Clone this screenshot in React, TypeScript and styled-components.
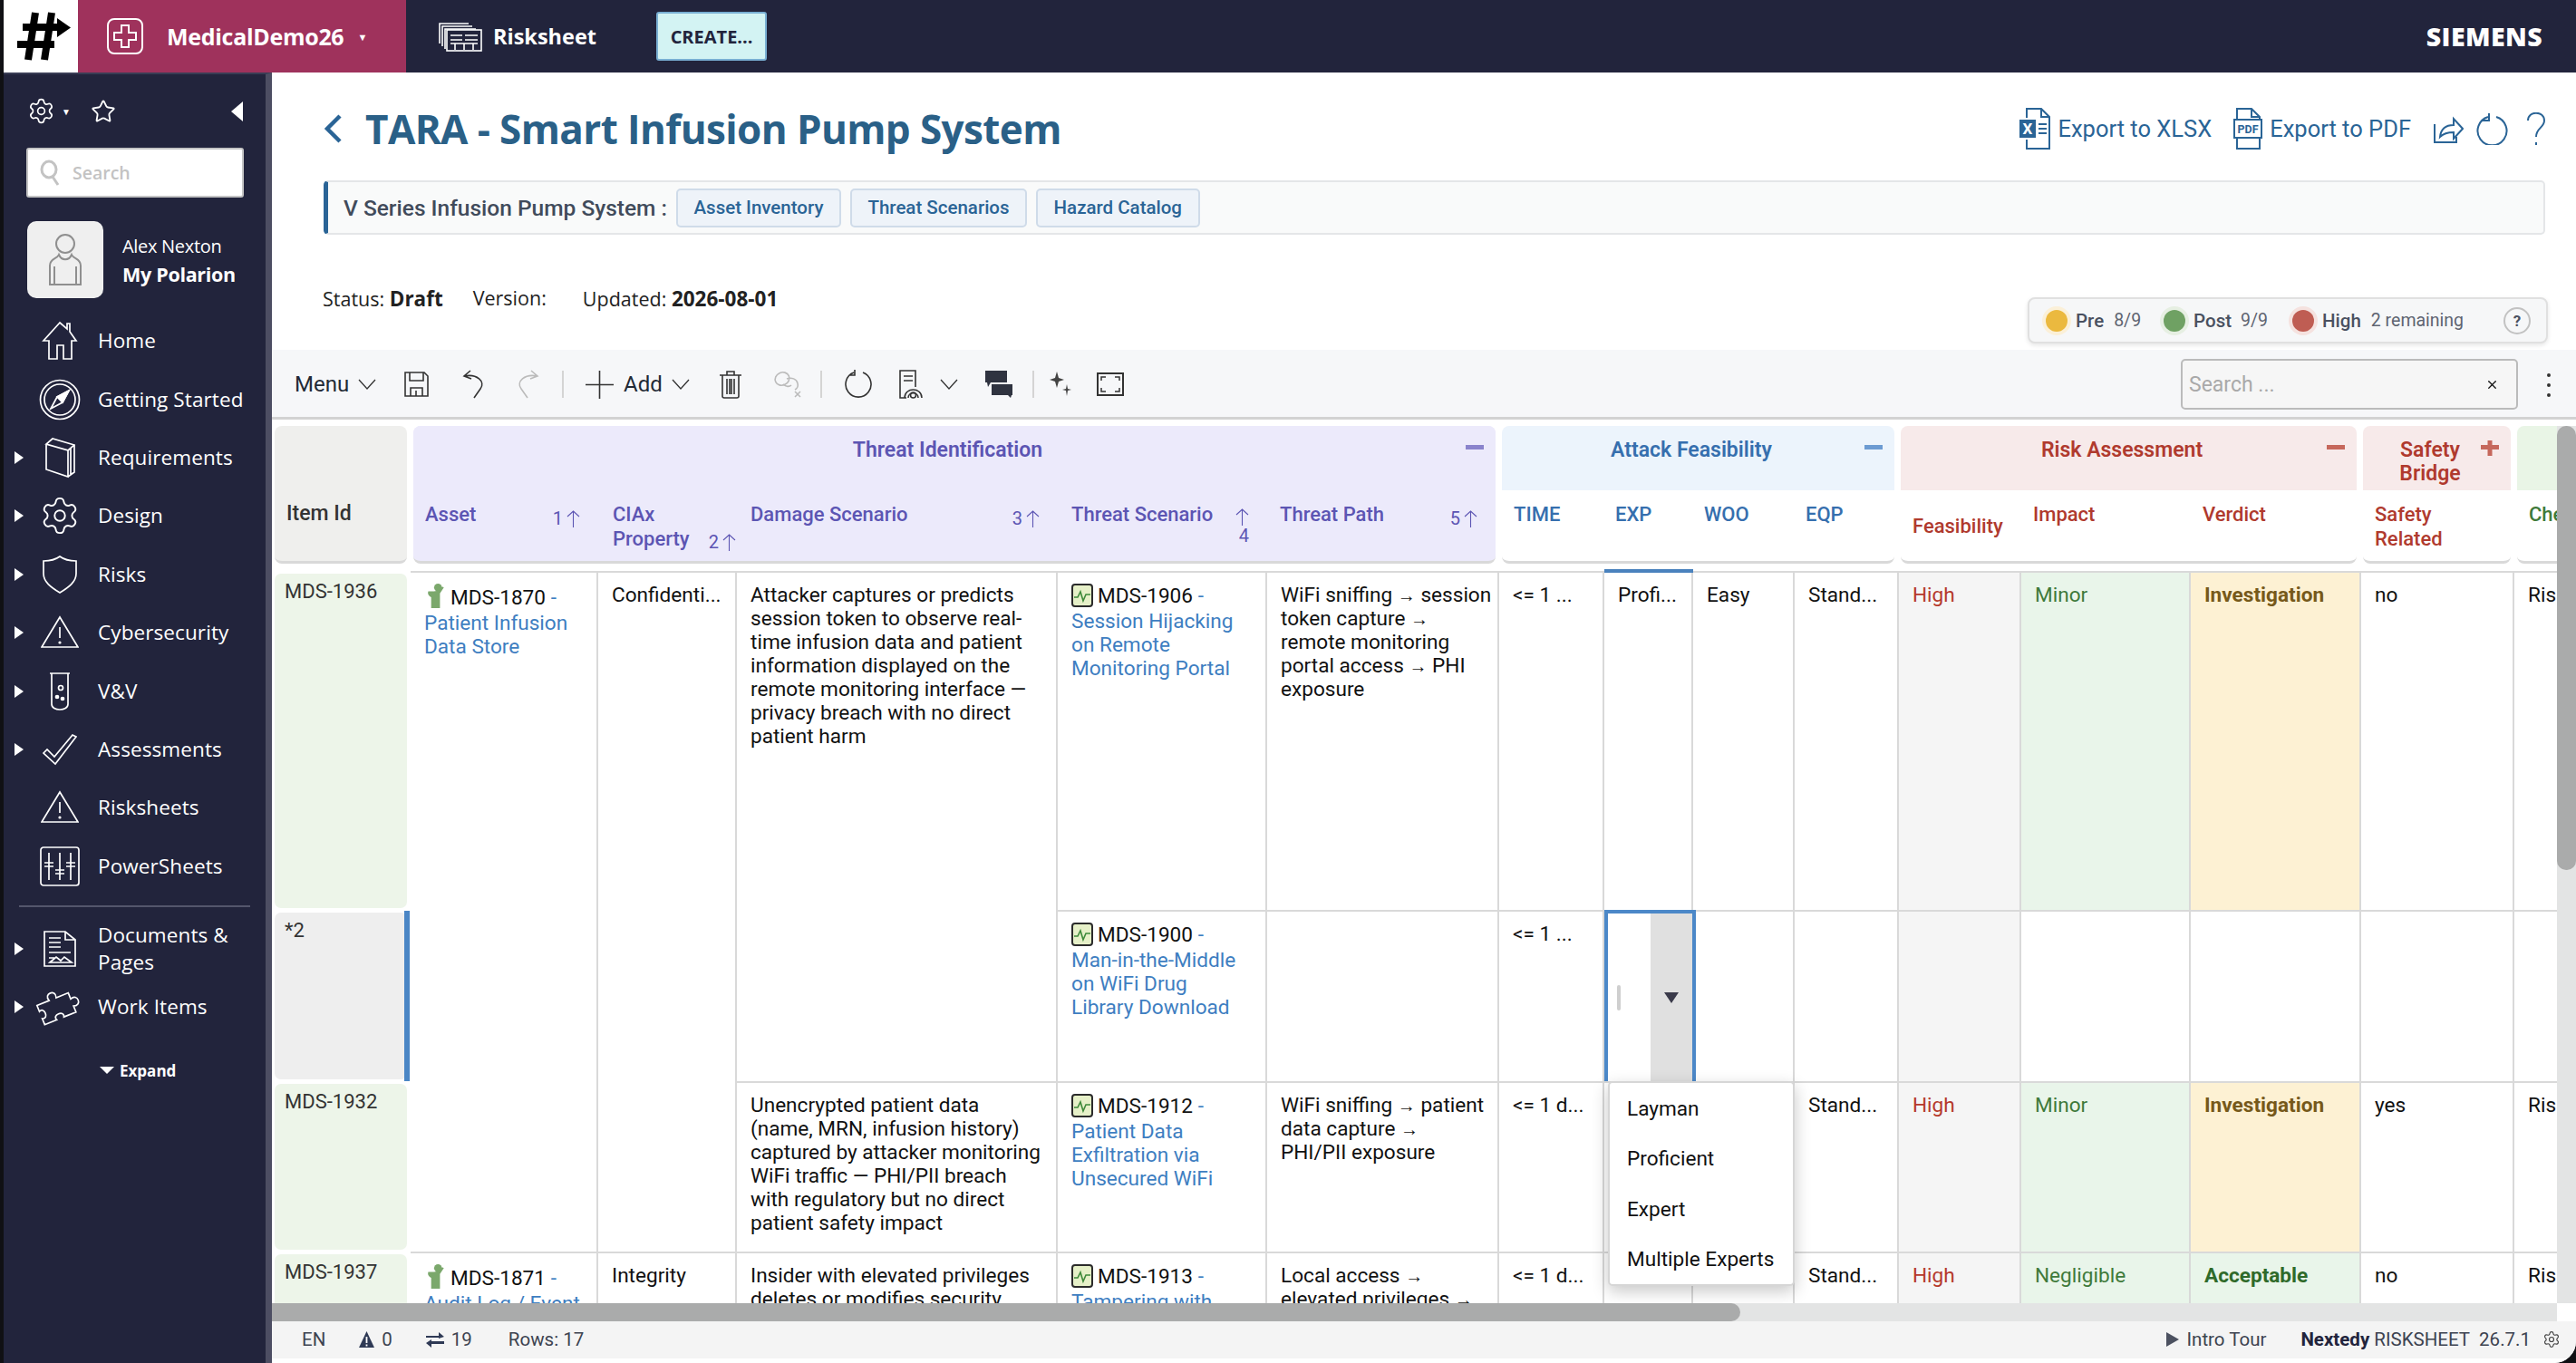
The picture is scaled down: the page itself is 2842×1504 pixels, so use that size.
import React from 'react';
import styled, { createGlobalStyle } from 'styled-components';
import { Settings, Star, X } from 'lucide-react';

const SANS = '"Open Sans", "Noto Sans", sans-serif';
const TABLE = 'Roboto, "Liberation Sans", sans-serif';

const Global = createGlobalStyle`
  html, body { margin: 0; padding: 0; background: #101014; }
  body { width: 2842px; height: 1504px; overflow: hidden; font-family: ${TABLE}; }
  * { box-sizing: border-box; }
`;

const Frame = styled.div`
  margin-left: 4px;
  width: 2838px;
  height: 1504px;
  display: flex;
  flex-direction: column;
  background: #fff;
  border-radius: 0 0 24px 0;
  overflow: hidden;
`;

/* top bar */
const TopBar = styled.header`
  height: 80px;
  flex: none;
  display: flex;
  align-items: center;
  background: #22243c;
  color: #fff;
`;
const LogoBox = styled.div`
  width: 82px;
  height: 80px;
  background: #fff;
  display: flex;
  align-items: center;
  padding-left: 15px;
`;
const ProjectBlock = styled.div`
  width: 362px;
  height: 80px;
  background: #9f325c;
  display: flex;
  align-items: center;
  padding-left: 32px;
  font: 700 25px ${SANS};
  letter-spacing: -0.3px;
`;
const ProjectName = styled.span`
  margin-left: 26px;
`;
const SmallCaret = styled.span`
  margin-left: 15px;
  font-size: 11px;
`;
const AppTitle = styled.div`
  margin-left: 36px;
  display: flex;
  align-items: center;
  gap: 12px;
  font: 700 23.5px ${SANS};
`;
const CreateButton = styled.button`
  margin-left: 66px;
  width: 122px;
  height: 54px;
  background: #d3f3f3;
  border: 2px solid #79afd3;
  border-radius: 3px;
  color: #22243c;
  font: 700 20px ${SANS};
  padding: 0;
`;
const Brand = styled.div`
  margin-left: auto;
  margin-right: 37px;
  font: 800 28.5px ${SANS};
  letter-spacing: 0.4px;
`;

/* body */
const Body = styled.div`
  flex: 1;
  min-height: 0;
  display: flex;
`;
const Sidebar = styled.nav`
  width: 296px;
  flex: none;
  background: #22243c;
  border-top: 2px solid #3a3d55;
  border-right: 7px solid #4d4e63;
  color: #fff;
  display: flex;
  flex-direction: column;
  font-family: ${SANS};
`;
const SideTools = styled.div`
  height: 61px;
  padding: 20px 25px 0 26px;
  display: flex;
  align-items: center;
`;
const ToolCaret = styled.span`
  margin-left: 7px;
  font-size: 10px;
`;
const StarSlot = styled.span`
  margin-left: 22px;
  display: flex;
`;
const CollapseArrow = styled.span`
  margin-left: auto;
  width: 0;
  height: 0;
  border-top: 11px solid transparent;
  border-bottom: 11px solid transparent;
  border-right: 13px solid #fff;
`;
const SideSearch = styled.div`
  margin: 20px 0 0 25px;
  width: 240px;
  height: 55px;
  background: #fff;
  border: 2px solid #c4c4c4;
  border-radius: 3px;
  display: flex;
  align-items: center;
  gap: 14px;
  padding-left: 13px;
  color: #c3c3c3;
  font: 600 19.5px ${SANS};
`;
const UserRow = styled.div`
  margin: 26px 0 0 26px;
  display: flex;
  align-items: center;
  gap: 21px;
`;
const Avatar = styled.div`
  width: 84px;
  height: 85px;
  background: #efefef;
  border-radius: 10px;
  display: flex;
  align-items: center;
  justify-content: center;
`;
const UserName = styled.div`
  font-size: 20px;
  line-height: 31px;
  letter-spacing: -0.3px;
`;
const UserLink = styled.div`
  font-size: 21.5px;
  line-height: 31px;
  font-weight: 700;
  letter-spacing: -0.3px;
`;
const NavList = styled.div`
  margin-top: 15px;
  display: flex;
  flex-direction: column;
`;
const NavItem = styled.div`
  height: 64.4px;
  display: grid;
  grid-template-columns: 24px 60px 1fr;
  align-items: center;
  padding-left: 8px;
  font-size: 22.5px;
  line-height: 30px;
  letter-spacing: 0.1px;
`;
const NavArrow = styled.span`
  width: 0;
  height: 0;
  border-top: 7px solid transparent;
  border-bottom: 7px solid transparent;
  border-left: 10px solid #fff;
  margin-left: 4px;
`;
const NavIcon = styled.span`
  grid-column: 2;
  display: flex;
  justify-content: center;
`;
const NavLabel = styled.span`
  grid-column: 3;
  padding-left: 12px;
`;
const NavDivider = styled.hr`
  margin: 11px 17px 14px 17px;
  border: 0;
  border-top: 2px solid #54566c;
`;
const ExpandRow = styled.div`
  margin-top: 26px;
  padding-left: 106px;
  display: flex;
  align-items: center;
  gap: 6px;
  font-size: 17px;
  font-weight: 700;
`;
const ExpandCaret = styled.span`
  width: 0;
  height: 0;
  border-left: 8px solid transparent;
  border-right: 8px solid transparent;
  border-top: 8px solid #fff;
`;

/* main */
const Main = styled.main`
  flex: 1;
  min-width: 0;
  display: flex;
  flex-direction: column;
`;
const PageHead = styled.section`
  height: 306px;
  flex: none;
  padding: 0 34px 0 57px;
  display: flex;
  flex-direction: column;
`;
const TitleRow = styled.div`
  height: 119px;
  display: flex;
  align-items: center;
  padding-top: 4px;
`;
const Title = styled.h1`
  margin: 0 0 0 24px;
  font: 700 44px ${SANS};
  letter-spacing: -0.6px;
  color: #2a6087;
`;
const ExportGroup = styled.div`
  margin-left: auto;
  display: flex;
  align-items: center;
  color: #2a6496;
  font: 400 25.5px ${TABLE};
`;
const ExportLink = styled.span<{ $ml?: number }>`
  display: flex;
  align-items: center;
  gap: 8px;
  margin-left: ${(p) => p.$ml ?? 0}px;
`;
const HeadIcon = styled.svg<{ $ml: number }>`
  margin-left: ${(p) => p.$ml}px;
`;
const CrumbBar = styled.div`
  height: 60px;
  flex: none;
  display: flex;
  align-items: center;
  gap: 10px;
  background: #f9fafa;
  border: 2px solid #e4e6e8;
  border-left: 5px solid #2a6496;
  border-radius: 5px;
  padding-left: 17px;
`;
const CrumbTitle = styled.span`
  font: 500 24.5px ${TABLE};
  color: #414b5b;
`;
const Chip = styled.span`
  height: 43px;
  display: flex;
  align-items: center;
  padding: 0 17.5px;
  background: #eef3f9;
  border: 2px solid #cfdbe9;
  border-radius: 5px;
  color: #2a6496;
  font: 500 20.5px ${TABLE};
`;
const StatusRow = styled.div`
  flex: 1;
  display: flex;
  justify-content: space-between;
  align-items: flex-start;
  margin: 0 -3px 0 -1px;
`;
const StatusMeta = styled.div`
  margin-top: 55px;
  display: flex;
  font: 400 21.5px ${SANS};
  color: #222;
`;
const MetaItem = styled.span<{ $ml?: number }>`
  margin-left: ${(p) => p.$ml ?? 0}px;
  b { font-weight: 700; font-size: 22.5px; }
`;
const ProgressPill = styled.div`
  margin-top: 69px;
  width: 574px;
  height: 51px;
  display: flex;
  align-items: center;
  padding-left: 18px;
  background: #f6f7f8;
  border: 2px solid #e0e0e0;
  border-radius: 8px;
  box-shadow: 0 2px 5px rgba(0, 0, 0, 0.1);
  font: 500 20.5px ${TABLE};
  color: #4a5160;
`;
const Dot = styled.span<{ $c: string; $glow: string; $ml?: number }>`
  width: 24px;
  height: 24px;
  border-radius: 50%;
  background: ${(p) => p.$c};
  box-shadow: 0 0 0 4px ${(p) => p.$glow};
  margin: 0 9px 0 ${(p) => p.$ml ?? 0}px;
`;
const PillCount = styled.span<{ $ml: number }>`
  margin-left: ${(p) => p.$ml}px;
  font-weight: 400;
  font-size: 19.5px;
  color: #5e6471;
`;
const HelpCircle = styled.span`
  margin-left: auto;
  margin-right: 17px;
  width: 30px;
  height: 30px;
  border: 2px solid #c2c2c2;
  border-radius: 50%;
  display: flex;
  align-items: center;
  justify-content: center;
  font: 700 17px ${TABLE};
`;

/* toolbar */
const Toolbar = styled.div`
  height: 77px;
  flex: none;
  display: flex;
  align-items: center;
  padding: 2px 0 0 25px;
  background: #f6f7f9;
  border-bottom: 3px solid #d2d2d2;
  color: #222a36;
  font: 400 24px ${TABLE};
`;
const ToolLabel = styled.span<{ $w: number; $ml?: number }>`
  width: ${(p) => p.$w}px;
  margin-left: ${(p) => p.$ml ?? 0}px;
`;
const ToolSvg = styled.svg<{ $ml: number }>`
  margin-left: ${(p) => p.$ml}px;
  flex: none;
`;
const ToolSep = styled.span<{ $ml: number }>`
  width: 2px;
  height: 30px;
  background: #d4d4d4;
  margin-left: ${(p) => p.$ml}px;
`;
const SearchBox = styled.div`
  margin-left: auto;
  margin-right: 64px;
  width: 372px;
  height: 56px;
  background: #f6f6f6;
  border: 2px solid #bbb;
  border-radius: 5px;
  display: flex;
  align-items: center;
  justify-content: space-between;
  padding: 0 19px 0 7px;
  color: #a9a9a9;
  font-size: 23px;
`;
const Kebab = styled.span`
  position: absolute;
  right: 28px;
  top: 412px;
  display: flex;
  flex-direction: column;
  gap: 7px;
  i { width: 4px; height: 4px; border-radius: 50%; background: #333; display: block; }
`;

/* table */
const TableArea = styled.div`
  position: relative;
  flex: 1;
  min-height: 0;
  display: flex;
  flex-direction: column;
  padding-top: 7px;
`;
const HeaderRow = styled.div`
  height: 152px;
  flex: none;
  display: flex;
  gap: 7px;
  padding-left: 3px;
  overflow: hidden;
`;
const ItemHeader = styled.div`
  width: 146px;
  flex: none;
  background: #efefed;
  border-bottom: 3px solid #d9d9d9;
  border-radius: 8px;
  padding: 84px 0 0 13px;
  font: 500 23px/26px ${TABLE};
  color: #333;
`;
const Group = styled.div<{ $w: number; $fill: string; $solid?: boolean; $fg: string }>`
  position: relative;
  width: ${(p) => p.$w}px;
  flex: none;
  color: ${(p) => p.$fg};
  border-bottom: 3px solid #d9d9d9;
  border-radius: 8px;
  background: ${(p) => (p.$solid ? p.$fill : '#fff')};
  overflow: hidden;
  font: 500 22px/26px ${TABLE};
`;
const GroupTitle = styled.div<{ $fill: string }>`
  height: 71px;
  background: ${(p) => p.$fill};
  padding: 14px 15px 0 0;
  text-align: center;
  font-size: 23px;
  font-weight: 600;
`;
const GroupToggle = styled.span`
  position: absolute;
  top: 16px;
  right: 13px;
  font-size: 0;
`;
const SubRow = styled.div<{ $cols: string }>`
  display: grid;
  grid-template-columns: ${(p) => p.$cols};
  padding-left: 5px;
`;
const SubCell = styled.div<{ $top?: number }>`
  position: relative;
  display: flex;
  justify-content: space-between;
  align-items: flex-start;
  padding: ${(p) => p.$top ?? 13}px 8px 0;
  line-height: 27px;
`;
const SortMark = styled.span<{ $low?: boolean; $stack?: boolean; $mr: number }>`
  display: flex;
  flex-direction: ${(p) => (p.$stack ? 'column' : 'row')};
  align-items: ${(p) => (p.$stack ? 'flex-end' : 'center')};
  gap: ${(p) => (p.$stack ? 0 : 4)}px;
  margin-top: ${(p) => (p.$low ? 33 : 7)}px;
  margin-right: ${(p) => p.$mr}px;
  font-weight: 400;
  font-size: 20px;
  line-height: 22px;
  svg { flex: none; }
`;

const TableBody = styled.div`
  position: relative;
  height: 816px;
  flex: none;
  padding-top: 8px;
  overflow: hidden;
  display: grid;
  grid-template-columns: 153px 207px 153px 354px 231px 256px 116px 98px 112px 115px 135px 187px 188px 169px 68px;
  grid-template-rows: 374px 189px 188px 260px;
  font: 400 22.6px/26px ${TABLE};
  color: #111;
`;
const ItemCell = styled.div<{ $current?: boolean }>`
  position: relative;
  margin: 3px 4px 2px 3px;
  padding: 7px 11px;
  border-radius: 7px;
  background: ${(p) => (p.$current ? '#eeeeee' : '#edf5e9')};
  color: #333;
  font-size: 22px;
  &::after {
    content: '';
    display: ${(p) => (p.$current ? 'block' : 'none')};
    position: absolute;
    right: -3px;
    top: -2px;
    bottom: -2px;
    width: 6px;
    background: #4a86c5;
  }
`;
const Cell = styled.div<{ $span?: number; $bg?: string; $fg?: string; $bold?: boolean; $active?: boolean }>`
  position: relative;
  grid-row: span ${(p) => p.$span ?? 1};
  padding: 12px 8px 0 15px;
  border-top: 2px solid #d9d9d9;
  border-right: 2px solid #d9d9d9;
  background: ${(p) => p.$bg ?? '#fff'};
  color: ${(p) => p.$fg ?? 'inherit'};
  font-weight: ${(p) => (p.$bold ? 700 : 400)};
  overflow: visible;
  &::before {
    content: '';
    display: ${(p) => (p.$active ? 'block' : 'none')};
    position: absolute;
    top: -4px;
    left: 0;
    right: -2px;
    height: 4px;
    background: #4a82bd;
  }
`;
const TextLine = styled.div`
  white-space: nowrap;
`;
const ArrowGlyph = styled.span`
  font-size: 20px;
`;
const ItemRef = styled.span`
  svg { vertical-align: -5px; margin-right: 5px; }
`;
const ItemDash = styled.span`
  color: #3e7ec1;
`;
const ItemLink = styled.div`
  margin-top: 2px;
  max-width: 192px;
  color: #3e7ec1;
`;
const EditorCell = styled.div`
  position: relative;
  z-index: 2;
  margin-right: -3px;
  display: flex;
  border: 4px solid #4c88c8;
  border-bottom-width: 0;
  background: #fff;
`;
const EditorCaretArea = styled.div`
  width: 47px;
  display: flex;
  align-items: center;
  padding-left: 10px;
`;
const EditorCaret = styled.span`
  width: 4px;
  height: 28px;
  border-radius: 2px;
  background: #cfcfcf;
`;
const EditorButton = styled.div`
  flex: 1;
  background: #e0e0e0;
  display: flex;
  align-items: center;
  justify-content: center;
`;
const EditorTriangle = styled.span`
  width: 0;
  height: 0;
  border-left: 8px solid transparent;
  border-right: 8px solid transparent;
  border-top: 12px solid #3a3a4a;
`;
const Menu = styled.ul`
  position: absolute;
  z-index: 3;
  left: 1474px;
  top: 571px;
  width: 206px;
  height: 226px;
  margin: 0;
  padding: 1px 0 0;
  list-style: none;
  background: #fff;
  border: 2px solid #d6d6d6;
  border-radius: 5px;
  box-shadow: 0 6px 18px rgba(0, 0, 0, 0.22);
`;
const MenuItem = styled.li`
  height: 55.5px;
  display: flex;
  align-items: center;
  padding-left: 19px;
  white-space: nowrap;
`;
const HBar = styled.div`
  height: 20px;
  width: 2521px;
  flex: none;
  background: #e3e4e4;
`;
const HThumb = styled.div`
  height: 100%;
  width: 1620px;
  background: #aaabab;
  border-radius: 0 10px 10px 0;
`;
const VBar = styled.div`
  position: absolute;
  top: 7px;
  right: 0;
  bottom: 66px;
  width: 21px;
  background: #e3e4e4;
`;
const VThumb = styled.div`
  height: 490px;
  background: #aaabab;
  border-radius: 10px;
`;
const Footer = styled.footer`
  height: 41px;
  flex: none;
  display: flex;
  align-items: center;
  padding: 0 17px 2px 33px;
  background: #f4f4f4;
  color: #3d4350;
  font: 400 20.5px ${TABLE};
`;
const FootItem = styled.span<{ $ml?: number; $push?: boolean }>`
  display: flex;
  align-items: center;
  gap: 8px;
  margin-left: ${(p) => (p.$push ? 'auto' : `${p.$ml ?? 0}px`)};
`;
const FootBrand = styled.b`
  color: #22243c;
  font-weight: 700;
`;
const BelowFooter = styled.div`
  height: 5px;
  flex: none;
  background: #fff;
`;

/* drawings */
const Hash = () => (
  <svg width="60" height="54" viewBox="0 0 60 54" fill="none" stroke="#000" strokeWidth="8">
    <path d="M20 1 12 53M38 1 30 53M6 17H46M0 36H41" />
    <path d="M44 7 59 17.5 44 28Z" fill="#000" stroke="none" />
  </svg>
);
const CrossBadge = () => (
  <svg width="40" height="40" viewBox="0 0 40 40" fill="none" stroke="#fff" strokeWidth="2">
    <rect x="1" y="1" width="38" height="38" rx="7" />
    <path d="M16 8h8v8h8v8h-8v8h-8v-8H8v-8h8Z" />
  </svg>
);
const SheetStack = () => (
  <svg width="48" height="33" viewBox="0 0 48 33" fill="none" stroke="#fff" strokeWidth="1.6">
    <path d="M1 24V2h32M4 27V5h33M7 30V8h34" />
    <rect x="9" y="9" width="38" height="23" fill="#22243c" />
    <path d="M13 15h13M29 15h14M13 20h13M29 20h14M18 24v7M28 24v7M38 24v7M13 24h30" />
  </svg>
);
const Glass = () => (
  <svg width="22" height="30" viewBox="0 0 22 30" fill="none" stroke="#c3c3c3" strokeWidth="3">
    <ellipse cx="10" cy="11" rx="8" ry="9" />
    <path d="M14 19l6 9" />
  </svg>
);
const Person = () => (
  <svg width="38" height="58" viewBox="0 0 38 58" fill="none" stroke="#8f8f8f" strokeWidth="2">
    <ellipse cx="19" cy="11" rx="10" ry="10" />
    <path d="M12 23c-2 5-10 4-10 12v21h34V35c0-8-8-7-10-12-3 7-11 7-14 0Z" />
    <path d="M7 36v19M31 36v19" />
  </svg>
);

const navStroke = { fill: 'none', stroke: '#fff', strokeWidth: 1.7 };
const Icon = ({ d, w = 44, h = 44, extra }: { d: string; w?: number; h?: number; extra?: React.ReactNode }) => (
  <svg width={w} height={h} viewBox={`0 0 ${w} ${h}`} {...navStroke}>
    <path d={d} />
    {extra}
  </svg>
);
const Warn = () => (
  <Icon
    w={42}
    h={38}
    d="M21 2 41 35H1ZM21 13v12"
    extra={<circle cx="21" cy="30" r="1.6" fill="#fff" stroke="none" />}
  />
);
const NAV: { label: React.ReactNode; arrow?: boolean; icon: React.ReactNode; divider?: boolean }[] = [
  { label: 'Home', icon: <Icon w={40} h={44} d="M20 2 2 22h6v20h9V27h7v15h9V22h5L31 12V3h-3v6Z" /> },
  {
    label: 'Getting Started',
    icon: (
      <svg width="46" height="46" viewBox="0 0 46 46" {...navStroke}>
        <circle cx="23" cy="23" r="21.5" />
        <circle cx="23" cy="23" r="17" />
        <path d="M33 13 26 26 13 33 20 20Z" />
        <path d="M33 13 20 20 26 26Z" fill="#fff" />
      </svg>
    ),
  },
  { label: 'Requirements', arrow: true, icon: <Icon w={34} h={46} d="M2 8V36l24 8V15L2 8 9 2l24 7-7 6M26 44l7-5V9M29 12v29" /> },
  { label: 'Design', arrow: true, icon: <Settings size={46} strokeWidth={1} color="#fff" /> },
  { label: 'Risks', arrow: true, icon: <Icon w={40} h={44} d="M2 7C10 7 16 5 20 2c4 3 10 5 18 5v14c0 9-8 15-18 21C10 36 2 30 2 21Z" /> },
  { label: 'Cybersecurity', arrow: true, icon: <Warn /> },
  {
    label: 'V&V',
    arrow: true,
    icon: (
      <Icon
        w={24}
        h={44}
        d="M1 2H23M3 2V36c0 8 18 8 18 0V2"
        extra={
          <>
            <circle cx="13" cy="18" r="2.5" />
            <circle cx="9" cy="28" r="1.5" fill="#fff" />
            <circle cx="15" cy="30" r="1.5" fill="#fff" />
          </>
        }
      />
    ),
  },
  { label: 'Assessments', arrow: true, icon: <Icon w={38} h={36} d="M1 22 5 18 13 26 33 2 37 4 14 34Z" /> },
  { label: 'Risksheets', icon: <Warn /> },
  {
    label: 'PowerSheets',
    divider: true,
    icon: (
      <svg width="44" height="44" viewBox="0 0 44 44" {...navStroke}>
        <rect x="1" y="1" width="42" height="42" rx="3" />
        <path d="M10 7v30M22 7v30M34 7v30M5 18h10M17 26h10M29 18h10M5 22h10M17 30h10M29 22h10" />
      </svg>
    ),
  },
  {
    label: (
      <>
        Documents &amp;
        <br />
        Pages
      </>
    ),
    arrow: true,
    icon: <Icon w={36} h={42} d="M1 2H24L35 11V40H1ZM24 2V11H35M6 9h13M6 14h13M6 19h13M6 25h24M6 31h6M7 36l7-6 5 4 4-4 8 6Z" />,
  },
  {
    label: 'Work Items',
    arrow: true,
    icon: (
      <svg width="50" height="46" viewBox="0 0 50 46" overflow="visible" {...navStroke}>
        <path
          transform="translate(25 23) rotate(-22) scale(1.2) translate(-25 -23)"
          strokeWidth="1.4"
          d="M6 14H18c-3-8 10-8 7 0H37v6c8-3 8 10 0 7v6H25c3-6-10-6-7 0H6v-6c6 3 6-10 0-7Z"
        />
      </svg>
    ),
  },
];

const Xlsx = () => (
  <svg width="34" height="48" viewBox="0 0 34 48" fill="none" stroke="#2a6496" strokeWidth="2">
    <path d="M8 12V2h16l9 9v35H8V36" />
    <path d="M24 2v9h9M21 19h9M21 24h9M21 29h9" />
    <rect x="0" y="14" width="18" height="20" fill="#2a6496" stroke="none" />
    <text x="9" y="30" textAnchor="middle" fontSize="17" fontWeight="700" fill="#fff" stroke="none" fontFamily="Roboto">X</text>
  </svg>
);
const Pdf = () => (
  <svg width="32" height="48" viewBox="0 0 32 48" fill="none" stroke="#2a6496" strokeWidth="2">
    <path d="M4 14V2h16l9 9v3M4 34v12h25V34M20 2v9h9" />
    <rect x="1" y="14" width="30" height="20" />
    <text x="16" y="29" textAnchor="middle" fontSize="12.5" fontWeight="700" fill="#2a6496" stroke="none" fontFamily="Roboto">PDF</text>
  </svg>
);

const Chevron = ({ ml }: { ml: number }) => (
  <ToolSvg $ml={ml} width="20" height="12" viewBox="0 0 20 12" fill="none" stroke="#333" strokeWidth="1.3">
    <path d="M1 1l9 10 9-10" />
  </ToolSvg>
);

const SortArrow = () => (
  <svg width="15" height="19" viewBox="0 0 15 19" fill="none" stroke="currentColor" strokeWidth="1.1">
    <path d="M7.5 19V1M1 7l6.5-6L14 7" />
  </svg>
);

const PersonType = () => (
  <svg width="24" height="28" viewBox="0 0 22 26" fill="#7ba86c">
    <ellipse cx="14" cy="4" rx="4" ry="4" />
    <path d="M4 8c-1 3 1 5 3 6v11h9V10l4-6c-2-2-3 0-5 3-3 1-7 1-11 1Z" />
  </svg>
);
const ChartType = () => (
  <svg width="24" height="26" viewBox="0 0 24 26">
    <rect x="1" y="1" width="22" height="24" rx="3" fill="#e6f0c8" stroke="#2b2b2b" strokeWidth="2" />
    <path d="M3 15h4l3-6 3 10 3-7h5" fill="none" stroke="#3e8a3a" strokeWidth="1.6" />
  </svg>
);

const Toggle = ({ color, plus }: { color: string; plus?: boolean }) => (
  <GroupToggle>
    <svg width="20" height="20" viewBox="0 0 20 20" fill={color}>
      <rect x="0" y="5" width="20" height="5" />
      {plus && <rect x="7.5" y="-3" width="5" height="20" />}
    </svg>
  </GroupToggle>
);

const WorkRef = ({ kind, id, title }: { kind: 'p' | 'c'; id: string; title: string }) => (
  <ItemRef>
    {kind === 'p' ? <PersonType /> : <ChartType />}
    {id} <ItemDash>-</ItemDash>
    <ItemLink>{title}</ItemLink>
  </ItemRef>
);

// keeps the line breaks of the sheet, arrows drawn a little smaller than the font's
const Lines = ({ text }: { text: string[] }) => (
  <>
    {text.map((line, i) => (
      <TextLine key={i}>
        {line.split('→').map((part, j) => (
          <React.Fragment key={j}>
            {j > 0 && <ArrowGlyph>→</ArrowGlyph>}
            {part}
          </React.Fragment>
        ))}
      </TextLine>
    ))}
  </>
);

const FEAS = '#f5f5f5';
const RED = '#b5392b';
const GREEN_BG = '#e9f5ea';
const GREEN = '#3f7a3a';
const AMBER_BG = '#fdf1d3';
const AMBER = '#76591a';

const App = () => (
  <Frame>
    <Global />
    <TopBar>
      <LogoBox>
        <Hash />
      </LogoBox>
      <ProjectBlock>
        <CrossBadge />
        <ProjectName>MedicalDemo26</ProjectName>
        <SmallCaret>▼</SmallCaret>
      </ProjectBlock>
      <AppTitle>
        <SheetStack />
        Risksheet
      </AppTitle>
      <CreateButton>CREATE...</CreateButton>
      <Brand>SIEMENS</Brand>
    </TopBar>
    <Body>
      <Sidebar>
        <SideTools>
          <Settings size={31} strokeWidth={1.3} color="#fff" />
          <ToolCaret>▼</ToolCaret>
          <StarSlot>
            <Star size={28} strokeWidth={1.6} color="#fff" />
          </StarSlot>
          <CollapseArrow />
        </SideTools>
        <SideSearch>
          <Glass />
          Search
        </SideSearch>
        <UserRow>
          <Avatar>
            <Person />
          </Avatar>
          <div>
            <UserName>Alex Nexton</UserName>
            <UserLink>My Polarion</UserLink>
          </div>
        </UserRow>
        <NavList>
          {NAV.map((n, i) => (
            <React.Fragment key={i}>
              <NavItem>
                {n.arrow && <NavArrow />}
                <NavIcon>{n.icon}</NavIcon>
                <NavLabel>{n.label}</NavLabel>
              </NavItem>
              {n.divider && <NavDivider />}
            </React.Fragment>
          ))}
        </NavList>
        <ExpandRow>
          <ExpandCaret />
          Expand
        </ExpandRow>
      </Sidebar>
      <Main>
        <PageHead>
          <TitleRow>
            <svg width="22" height="32" viewBox="0 0 22 32" fill="none" stroke="#2a6496" strokeWidth="4.5">
              <path d="M18 2 4 16l14 14" />
            </svg>
            <Title>TARA - Smart Infusion Pump System</Title>
            <ExportGroup>
              <ExportLink>
                <Xlsx />
                Export to XLSX
              </ExportLink>
              <ExportLink $ml={24}>
                <Pdf />
                Export to PDF
              </ExportLink>
              <HeadIcon $ml={24} width="34" height="34" viewBox="0 0 34 34" fill="none" stroke="#2a6496" strokeWidth="2">
                <path d="M2 12v20h24v-6M8 26c1-9 7-13 15-13V6l10 11-10 11v-7c-7 0-11 1-15 5Z" />
              </HeadIcon>
              <HeadIcon $ml={14} width="35" height="36" viewBox="0 0 35 36" fill="none" stroke="#2a6496" strokeWidth="2">
                <path d="M13 4A16 16 0 1 0 22 4M14 0v8H6" transform="translate(0 1)" />
              </HeadIcon>
              <HeadIcon $ml={20} width="21" height="36" viewBox="0 0 21 36" fill="none" stroke="#2a6496" strokeWidth="2">
                <path d="M2 9c0-11 18-11 18 0 0 8-9 8-9 18M11 33v3" />
              </HeadIcon>
            </ExportGroup>
          </TitleRow>
          <CrumbBar>
            <CrumbTitle>V Series Infusion Pump System :</CrumbTitle>
            <Chip>Asset Inventory</Chip>
            <Chip>Threat Scenarios</Chip>
            <Chip>Hazard Catalog</Chip>
          </CrumbBar>
          <StatusRow>
            <StatusMeta>
              <MetaItem>
                Status: <b>Draft</b>
              </MetaItem>
              <MetaItem $ml={33}>Version:</MetaItem>
              <MetaItem $ml={40}>
                Updated: <b>2026-08-01</b>
              </MetaItem>
            </StatusMeta>
            <ProgressPill>
              <Dot $c="#ebb93f" $glow="#fbf0d8" />
              Pre
              <PillCount $ml={11}>8/9</PillCount>
              <Dot $c="#6fa163" $glow="#e6efe2" $ml={25} />
              Post
              <PillCount $ml={10}>9/9</PillCount>
              <Dot $c="#bf5d53" $glow="#f5e2df" $ml={27} />
              High
              <PillCount $ml={11}>2 remaining</PillCount>
              <HelpCircle>?</HelpCircle>
            </ProgressPill>
          </StatusRow>
        </PageHead>
        <Toolbar>
          <ToolLabel $w={70}>Menu</ToolLabel>
          <Chevron ml={0} />
          <ToolSvg $ml={31} width="27" height="28" viewBox="0 0 27 28" fill="none" stroke="#333" strokeWidth="1.6">
            <path d="M1 1h21l4 4v22H1ZM6 1v9h15V1M7 27v-9h13v9M13 21v6" />
          </ToolSvg>
          <ToolSvg $ml={37} width="25" height="32" viewBox="0 0 25 32" fill="none" stroke="#333" strokeWidth="1.6">
            <path d="M9 1 2 7l8 3M2 7c14-3 24 6 18 14l-7 10" />
          </ToolSvg>
          <ToolSvg $ml={35} width="25" height="32" viewBox="0 0 25 32" fill="none" stroke="#bbb" strokeWidth="1.6">
            <path d="M16 1l7 6-8 3M23 7C9 4-1 13 5 21l7 10" />
          </ToolSvg>
          <ToolSep $ml={25} />
          <ToolSvg $ml={24} width="31" height="31" viewBox="0 0 31 31" stroke="#333" strokeWidth="1.6">
            <path d="M15.5 0v31M0 15.5h31" />
          </ToolSvg>
          <ToolLabel $w={43} $ml={11}>Add</ToolLabel>
          <Chevron ml={10} />
          <ToolSvg $ml={33} width="24" height="31" viewBox="0 0 24 31" fill="none" stroke="#333" strokeWidth="1.6">
            <path d="M0 5h24M8 5V1h8v4M3 5v23c0 2 1 2 2 2h14c1 0 2 0 2-2V5M8 9v17M11 9v17M13 9v17M16 9v17" />
          </ToolSvg>
          <ToolSvg $ml={35} width="33" height="30" viewBox="0 0 33 30" fill="none" stroke="#bbb" strokeWidth="1.6">
            <ellipse cx="10" cy="9" rx="8" ry="7" transform="rotate(-25 10 9)" />
            <path d="M15 9c5-2 11 0 12 5 1 4-1 6-3 7M11 15c3 3 7 3 9 1M24 23l6 6M30 23l-6 6" />
          </ToolSvg>
          <ToolSep $ml={19} />
          <ToolSvg $ml={25} width="30" height="32" viewBox="0 0 30 32" fill="none" stroke="#333" strokeWidth="1.6">
            <path d="M10 3A14 14 0 1 0 20 3M11 0v6H5" />
          </ToolSvg>
          <ToolSvg $ml={30} width="30" height="32" viewBox="0 0 30 32" fill="none" stroke="#333" strokeWidth="1.6">
            <path d="M8 31H1V1h17v18M5 7h10M5 12h10" />
            <path d="M6 31c0-12 19-12 19 0M10 31c0-7 11-7 11 0" />
            <circle cx="15.5" cy="28" r="3" />
          </ToolSvg>
          <Chevron ml={15} />
          <ToolSvg $ml={30} width="30" height="30" viewBox="0 0 30 30" fill="#2f3340">
            <path d="M0 0h24v13H6l-3 5-1-5H0Z" />
            <path d="M7 15h23v12h-1l-1 3-3-3H7Z" />
          </ToolSvg>
          <ToolSep $ml={22} />
          <ToolSvg $ml={17} width="25" height="28" viewBox="0 0 25 28" fill="#444">
            <path d="M8 0l2 7 6 2-6 2-2 7-2-7-6-2 6-2ZM19 14l1 5 4 1-4 1-1 6-1-6-4-1 4-1Z" />
          </ToolSvg>
          <ToolSvg $ml={27} width="30" height="26" viewBox="0 0 30 26" fill="none" stroke="#333" strokeWidth="2">
            <rect x="1" y="1" width="28" height="24" />
            <path d="M5 9V5h5M20 5h5v4M25 17v4h-5M10 21H5v-4" strokeWidth="1.5" />
          </ToolSvg>
          <SearchBox>
            Search ...
            <X size={15} color="#111" strokeWidth={2} />
          </SearchBox>
          <Kebab>
            <i />
            <i />
            <i />
          </Kebab>
        </Toolbar>
        <TableArea>
          <HeaderRow>
            <ItemHeader>Item Id</ItemHeader>
            <Group $w={1194} $fill="#eceafb" $fg="#5c55b3" $solid>
              <GroupTitle $fill="#eceafb">Threat Identification</GroupTitle>
              <Toggle color="#8a83cc" />
              <SubRow $cols="207px 152px 354px 230px 246px">
                <SubCell>
                  Asset
                  <SortMark $mr={20}>
                    1
                    <SortArrow />
                  </SortMark>
                </SubCell>
                <SubCell>
                  <span>
                    CIAx
                    <br />
                    Property
                  </span>
                  <SortMark $low $mr={0}>
                    2
                    <SortArrow />
                  </SortMark>
                </SubCell>
                <SubCell>
                  Damage Scenario
                  <SortMark $mr={19}>
                    3
                    <SortArrow />
                  </SortMark>
                </SubCell>
                <SubCell>
                  Threat Scenario
                  <SortMark $stack $mr={18}>
                    <SortArrow />
                    4
                  </SortMark>
                </SubCell>
                <SubCell>
                  Threat Path
                  <SortMark $mr={12}>
                    5
                    <SortArrow />
                  </SortMark>
                </SubCell>
              </SubRow>
            </Group>
            <Group $w={433} $fill="#ecf4fc" $fg="#366fae">
              <GroupTitle $fill="#ecf4fc">Attack Feasibility</GroupTitle>
              <Toggle color="#6c9bd2" />
              <SubRow $cols="112px 98px 112px 100px">
                <SubCell>TIME</SubCell>
                <SubCell>EXP</SubCell>
                <SubCell>WOO</SubCell>
                <SubCell>EQP</SubCell>
              </SubRow>
            </Group>
            <Group $w={503} $fill="#f7eaea" $fg="#b03a2e">
              <GroupTitle $fill="#f7eaea">Risk Assessment</GroupTitle>
              <Toggle color="#c6685c" />
              <SubRow $cols="133px 187px 170px">
                <SubCell $top={26}>Feasibility</SubCell>
                <SubCell>Impact</SubCell>
                <SubCell>Verdict</SubCell>
              </SubRow>
            </Group>
            <Group $w={163} $fill="#f7eaea" $fg="#b03a2e">
              <GroupTitle $fill="#f7eaea">
                Safety
                <br />
                Bridge
              </GroupTitle>
              <Toggle color="#c6685c" plus />
              <SubRow $cols="1fr">
                <SubCell>
                  Safety
                  <br />
                  Related
                </SubCell>
              </SubRow>
            </Group>
            <Group $w={70} $fill="#e9f5e6" $fg="#3f7a3a">
              <GroupTitle $fill="#e9f5e6" />
              <SubRow $cols="1fr">
                <SubCell>Che</SubCell>
              </SubRow>
            </Group>
          </HeaderRow>
          <TableBody>
            {/* row 1 */}
            <ItemCell>MDS-1936</ItemCell>
            <Cell $span={3}>
              <WorkRef kind="p" id="MDS-1870" title="Patient Infusion Data Store" />
            </Cell>
            <Cell $span={3}>Confidenti...</Cell>
            <Cell $span={2}>
              <Lines
                text={[
                  'Attacker captures or predicts',
                  'session token to observe real-',
                  'time infusion data and patient',
                  'information displayed on the',
                  'remote monitoring interface —',
                  'privacy breach with no direct',
                  'patient harm',
                ]}
              />
            </Cell>
            <Cell>
              <WorkRef kind="c" id="MDS-1906" title="Session Hijacking on Remote Monitoring Portal" />
            </Cell>
            <Cell>
              <Lines
                text={['WiFi sniffing → session', 'token capture →', 'remote monitoring', 'portal access → PHI', 'exposure']}
              />
            </Cell>
            <Cell>{'<= 1 ...'}</Cell>
            <Cell $active>Profi...</Cell>
            <Cell>Easy</Cell>
            <Cell>Stand...</Cell>
            <Cell $bg={FEAS} $fg={RED}>High</Cell>
            <Cell $bg={GREEN_BG} $fg={GREEN}>Minor</Cell>
            <Cell $bg={AMBER_BG} $fg={AMBER} $bold>Investigation</Cell>
            <Cell>no</Cell>
            <Cell>Ris</Cell>
            {/* row 2 */}
            <ItemCell $current>*2</ItemCell>
            <Cell>
              <WorkRef kind="c" id="MDS-1900" title="Man-in-the-Middle on WiFi Drug Library Download" />
            </Cell>
            <Cell />
            <Cell>{'<= 1 ...'}</Cell>
            <EditorCell>
              <EditorCaretArea>
                <EditorCaret />
              </EditorCaretArea>
              <EditorButton>
                <EditorTriangle />
              </EditorButton>
            </EditorCell>
            <Cell />
            <Cell />
            <Cell $bg={FEAS} />
            <Cell />
            <Cell />
            <Cell />
            <Cell />
            {/* row 3 */}
            <ItemCell>MDS-1932</ItemCell>
            <Cell>
              <Lines
                text={[
                  'Unencrypted patient data',
                  '(name, MRN, infusion history)',
                  'captured by attacker monitoring',
                  'WiFi traffic — PHI/PII breach',
                  'with regulatory but no direct',
                  'patient safety impact',
                ]}
              />
            </Cell>
            <Cell>
              <WorkRef kind="c" id="MDS-1912" title="Patient Data Exfiltration via Unsecured WiFi" />
            </Cell>
            <Cell>
              <Lines text={['WiFi sniffing → patient', 'data capture →', 'PHI/PII exposure']} />
            </Cell>
            <Cell>{'<= 1 d...'}</Cell>
            <Cell />
            <Cell />
            <Cell>Stand...</Cell>
            <Cell $bg={FEAS} $fg={RED}>High</Cell>
            <Cell $bg={GREEN_BG} $fg={GREEN}>Minor</Cell>
            <Cell $bg={AMBER_BG} $fg={AMBER} $bold>Investigation</Cell>
            <Cell>yes</Cell>
            <Cell>Ris</Cell>
            {/* row 4 */}
            <ItemCell>MDS-1937</ItemCell>
            <Cell>
              <WorkRef kind="p" id="MDS-1871" title="Audit Log / Event" />
            </Cell>
            <Cell>Integrity</Cell>
            <Cell>
              <Lines text={['Insider with elevated privileges', 'deletes or modifies security']} />
            </Cell>
            <Cell>
              <WorkRef kind="c" id="MDS-1913" title="Tampering with" />
            </Cell>
            <Cell>
              <Lines text={['Local access →', 'elevated privileges →']} />
            </Cell>
            <Cell>{'<= 1 d...'}</Cell>
            <Cell />
            <Cell />
            <Cell>Stand...</Cell>
            <Cell $bg={FEAS} $fg={RED}>High</Cell>
            <Cell $bg={GREEN_BG} $fg={GREEN}>Negligible</Cell>
            <Cell $bg={GREEN_BG} $fg="#2f6a2a" $bold>Acceptable</Cell>
            <Cell>no</Cell>
            <Cell>Ris</Cell>
            <Menu>
              <MenuItem>Layman</MenuItem>
              <MenuItem>Proficient</MenuItem>
              <MenuItem>Expert</MenuItem>
              <MenuItem>Multiple Experts</MenuItem>
            </Menu>
          </TableBody>
          <HBar>
            <HThumb />
          </HBar>
          <VBar>
            <VThumb />
          </VBar>
          <Footer>
            <FootItem>EN</FootItem>
            <FootItem $ml={37}>
              <svg width="17" height="18" viewBox="0 0 17 18">
                <path d="M8.5 0 17 18H0Z" fill="#2f3a55" />
                <path d="M8.5 6v7M8.5 14.5v2" stroke="#fff" strokeWidth="1.8" />
              </svg>
              0
            </FootItem>
            <FootItem $ml={37}>
              <svg width="20" height="18" viewBox="0 0 20 18" fill="#2f3a55">
                <path d="M0 5h14V1l6 5-6 2V7H0ZM20 11H6V9L0 13l6 5v-4h14Z" />
              </svg>
              19
            </FootItem>
            <FootItem $ml={40}>Rows: 17</FootItem>
            <FootItem $push>
              <svg width="14" height="16" viewBox="0 0 14 16" fill="#4c5160">
                <path d="M0 0 14 8 0 16Z" />
              </svg>
              Intro Tour
            </FootItem>
            <FootItem $ml={38}>
              <span>
                <FootBrand>Nextedy</FootBrand> RISKSHEET
              </span>
            </FootItem>
            <FootItem $ml={10}>26.7.1</FootItem>
            <FootItem $ml={13}>
              <Settings size={20} strokeWidth={1.4} color="#444" />
            </FootItem>
          </Footer>
          <BelowFooter />
        </TableArea>
      </Main>
    </Body>
  </Frame>
);

export default App;
